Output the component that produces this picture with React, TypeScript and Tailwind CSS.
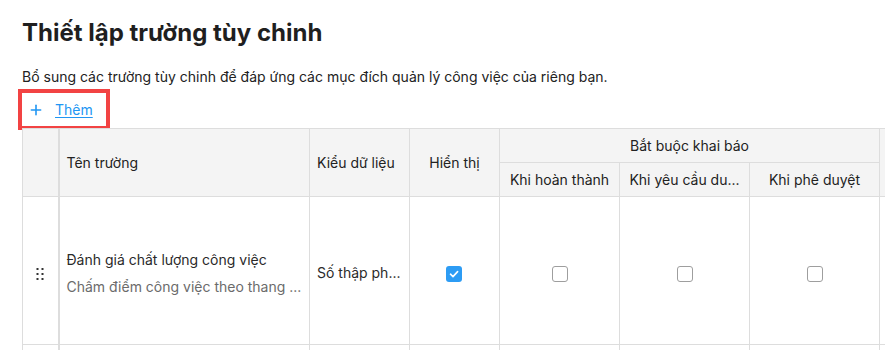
import { Plus } from 'lucide-react';

const requiredCols = ['Khi hoàn thành', 'Khi yêu cầu du...', 'Khi phê duyệt'];

function Checkbox({ checked }: { checked?: boolean }) {
  if (checked) {
    return (
      <span className="inline-flex w-4 h-4 rounded-[3px] bg-[#2d9cf4] items-center justify-center align-middle">
        <svg width="12" height="12" viewBox="0 0 12 12" fill="none">
          <path d="M2.5 6.2 L5 8.6 L9.6 3.6" stroke="white" strokeWidth="1.6" strokeLinecap="round" strokeLinejoin="round" />
        </svg>
      </span>
    );
  }
  return <span className="inline-block w-4 h-4 rounded-[3px] border border-[#9e9e9e] bg-white align-middle" />;
}

function DragHandle() {
  return (
    <svg width="8" height="12" viewBox="0 0 8 12" className="inline-block">
      {[1, 6, 11].map((y) =>
        [1.5, 6.5].map((x) => <rect key={`${x}-${y}`} x={x - 1} y={y - 1} width="2" height="2" fill="#333" />)
      )}
    </svg>
  );
}

export default function App() {
  return (
    <div className="w-[885px] h-[350px] overflow-hidden bg-white font-['Inter','Noto_Sans',sans-serif] text-[#222]">
      <div className="pl-[22px] pt-[17px]">
        <h1 className="text-[24px] leading-[32px] font-bold text-[#1f1f1f]">Thiết lập trường tùy chinh</h1>
        <p className="mt-[18px] text-[14px] leading-[20px] text-[#222]">
          Bổ sung các trường tùy chinh để đáp ứng các mục đích quản lý công việc của riêng bạn.
        </p>
      </div>

      <div className="ml-[18px] mt-[2px] w-[92px] h-[41px] border-4 border-[#f24343] flex items-center pl-[6px] gap-[11px]">
        <Plus size={16} strokeWidth={2.4} className="text-[#2196f3]" />
        <span className="text-[14px] text-[#2196f3] underline underline-offset-2">Thêm</span>
      </div>

      <div className="ml-[22px] -mt-[2px]">
        <table className="border-collapse table-fixed w-[1000px] text-[14px]">
          <colgroup>
            <col className="w-[36px]" />
            <col className="w-[251px]" />
            <col className="w-[100px]" />
            <col className="w-[90px]" />
            <col className="w-[120px]" />
            <col className="w-[130px]" />
            <col className="w-[130px]" />
            <col className="w-[143px]" />
          </colgroup>
          <thead>
            <tr className="bg-[#f4f4f4]">
              <th rowSpan={2} className="h-[68px] border border-[#dddddd] border-r-2 font-normal" />
              <th rowSpan={2} className="border border-[#dddddd] font-normal text-left pl-[7px]">Tên trường</th>
              <th rowSpan={2} className="border border-[#dddddd] font-normal text-left pl-[7px] whitespace-nowrap">Kiểu dữ liệu</th>
              <th rowSpan={2} className="border border-[#dddddd] font-normal text-center whitespace-nowrap">Hiển thị</th>
              <th colSpan={3} className="h-[34px] border border-[#dddddd] font-normal text-center">Bắt buộc khai báo</th>
              <th rowSpan={2} className="border border-[#dddddd] font-normal" />
            </tr>
            <tr className="bg-[#f4f4f4]">
              {requiredCols.map((c) => (
                <th key={c} className="h-[34px] border border-[#dddddd] font-normal text-center whitespace-nowrap">
                  {c}
                </th>
              ))}
            </tr>
          </thead>
          <tbody>
            <tr>
              <td className="h-[148px] border border-[#dddddd] border-r-2 text-center pt-[4px]">
                <DragHandle />
              </td>
              <td className="border border-[#dddddd] pl-[7px] pr-[6px] pt-[6px]">
                <div className="text-[#2a2a2a] leading-[20px]">Đánh giá chất lượng công việc</div>
                <div className="mt-[7px] text-[#6b6b6b] leading-[20px] whitespace-nowrap">
                  Chấm điểm công việc theo thang ...
                </div>
              </td>
              <td className="border border-[#dddddd] pl-[7px] pt-[4px] whitespace-nowrap text-[#2a2a2a]">Số thập ph...</td>
              <td className="border border-[#dddddd] text-center pt-[4px] pr-[2px]">
                <Checkbox checked />
              </td>
              {requiredCols.map((c) => (
                <td key={c} className="border border-[#dddddd] text-center pt-[4px]">
                  <Checkbox />
                </td>
              ))}
              <td className="border border-[#dddddd]" />
            </tr>
            <tr>
              <td className="h-[40px] border border-[#dddddd] border-r-2" />
              <td className="border border-[#dddddd]" />
              <td className="border border-[#dddddd]" />
              <td className="border border-[#dddddd]" />
              <td className="border border-[#dddddd]" />
              <td className="border border-[#dddddd]" />
              <td className="border border-[#dddddd]" />
              <td className="border border-[#dddddd]" />
            </tr>
          </tbody>
        </table>
      </div>
    </div>
  );
}
